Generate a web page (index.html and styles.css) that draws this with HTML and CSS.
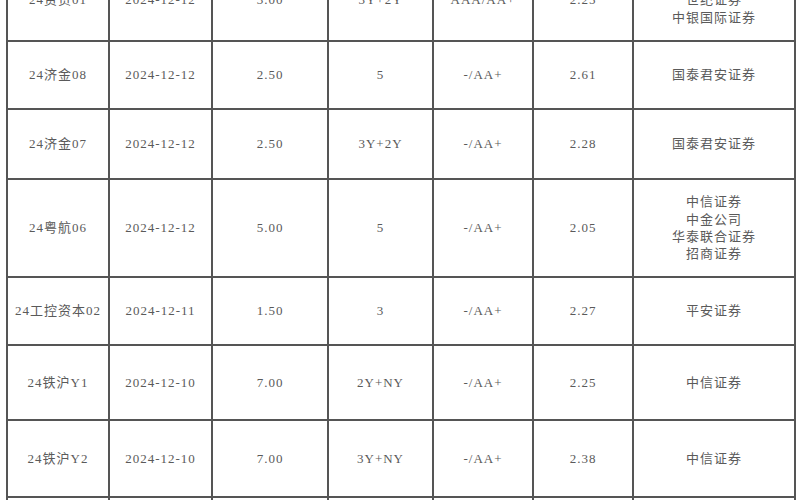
FILE: index.html
```html
<!DOCTYPE html>
<html lang="zh-CN">
<head>
<meta charset="utf-8">
<title>债券发行</title>
<link rel="stylesheet" href="styles.css">
</head>
<body>
<div class="viewport">
<table class="bonds">
  <colgroup>
    <col class="c1"><col class="c2"><col class="c3"><col class="c4"><col class="c5"><col class="c6"><col class="c7">
  </colgroup>
  <tbody>
    <tr class="r1">
      <td>24资货01</td><td>2024-12-12</td><td>3.00</td><td>3Y+2Y</td><td>AAA/AA+</td><td>2.25</td>
      <td>中信建投证券<br>世纪证券<br>中银国际证券</td>
    </tr>
    <tr class="r2">
      <td>24济金08</td><td>2024-12-12</td><td>2.50</td><td>5</td><td>-/AA+</td><td>2.61</td><td>国泰君安证券</td>
    </tr>
    <tr class="r3">
      <td>24济金07</td><td>2024-12-12</td><td>2.50</td><td>3Y+2Y</td><td>-/AA+</td><td>2.28</td><td>国泰君安证券</td>
    </tr>
    <tr class="r4">
      <td>24粤航06</td><td>2024-12-12</td><td>5.00</td><td>5</td><td>-/AA+</td><td>2.05</td>
      <td>中信证券<br>中金公司<br>华泰联合证券<br>招商证券</td>
    </tr>
    <tr class="r5">
      <td>24工控资本02</td><td>2024-12-11</td><td>1.50</td><td>3</td><td>-/AA+</td><td>2.27</td><td>平安证券</td>
    </tr>
    <tr class="r6">
      <td>24铁沪Y1</td><td>2024-12-10</td><td>7.00</td><td>2Y+NY</td><td>-/AA+</td><td>2.25</td><td>中信证券</td>
    </tr>
    <tr class="r7">
      <td>24铁沪Y2</td><td>2024-12-10</td><td>7.00</td><td>3Y+NY</td><td>-/AA+</td><td>2.38</td><td>中信证券</td>
    </tr>
    <tr class="r8">
      <td></td><td></td><td></td><td></td><td></td><td></td><td></td>
    </tr>
  </tbody>
</table>
</div>
</body>
</html>
```

FILE: styles.css
```css
html, body {
  margin: 0;
  padding: 0;
  background: #ffffff;
}

.viewport {
  width: 800px;
  height: 500px;
  overflow: hidden;
}

.bonds {
  border-collapse: collapse;
  table-layout: fixed;
  width: 788px;
  margin: -42px 0 0 6px;
  font-family: "Liberation Serif", "Noto Sans CJK SC", serif;
  font-size: 13px;
  letter-spacing: 1px;
  color: #5a5a5a;
}

.c1 { width: 102px; }
.c2 { width: 103px; }
.c3 { width: 116px; }
.c4 { width: 105px; }
.c5 { width: 100px; }
.c6 { width: 100px; }
.c7 { width: 162px; }

.bonds td {
  border: 2px solid #555555;
  padding: 0;
  text-align: center;
  vertical-align: middle;
  line-height: 17.3px;
  white-space: nowrap;
  overflow: hidden;
}

.r1 td { height: 80px; }
.r2 td { height: 66px; }
.r3 td { height: 68px; }
.r4 td { height: 96px; }
.r5 td { height: 66px; }
.r6 td { height: 73px; }
.r7 td { height: 75px; }
.r8 td { height: 80px; }
```
